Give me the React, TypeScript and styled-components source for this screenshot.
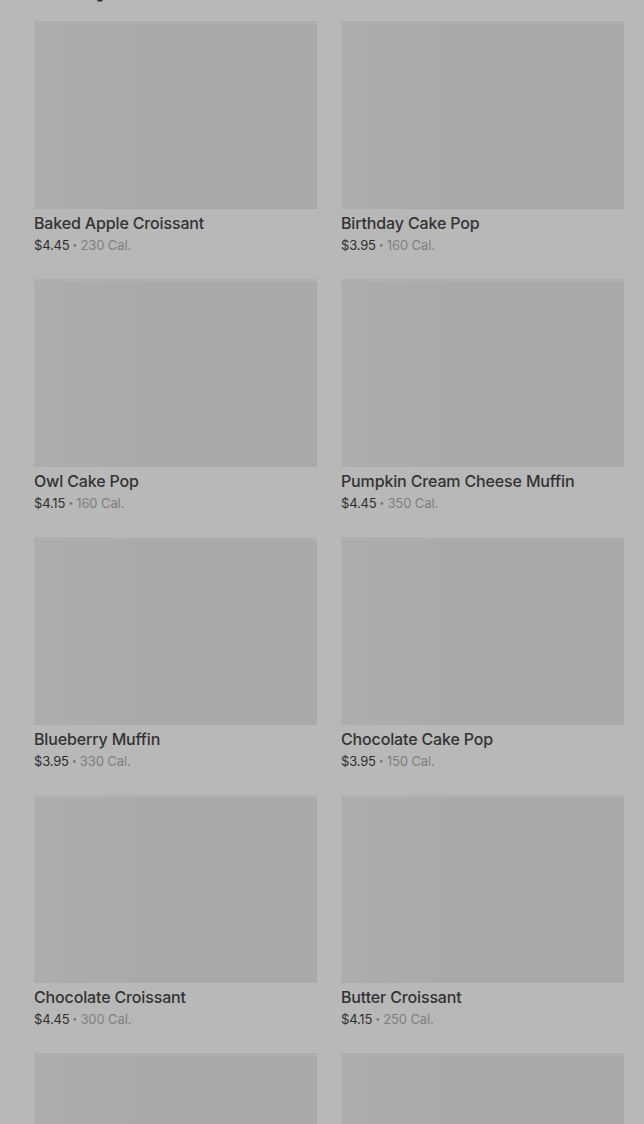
import React from 'react';
import styled, {createGlobalStyle} from "styled-components";

type Item = { name: string, price: string, cal: string };

const items: Item[] = [
    {name: 'Baked Apple Croissant', price: '$4.45', cal: '230 Cal.'},
    {name: 'Birthday Cake Pop', price: '$3.95', cal: '160 Cal.'},
    {name: 'Owl Cake Pop', price: '$4.15', cal: '160 Cal.'},
    {name: 'Pumpkin Cream Cheese Muffin', price: '$4.45', cal: '350 Cal.'},
    {name: 'Blueberry Muffin', price: '$3.95', cal: '330 Cal.'},
    {name: 'Chocolate Cake Pop', price: '$3.95', cal: '150 Cal.'},
    {name: 'Chocolate Croissant', price: '$4.45', cal: '300 Cal.'},
    {name: 'Butter Croissant', price: '$4.15', cal: '250 Cal.'},
];

const GlobalStyle = createGlobalStyle`
  html, body {
    margin: 0;
    padding: 0;
    background: #b8b8b8;
    overflow: hidden;
  }
  body {
    font-family: Inter, "Noto Sans", sans-serif;
  }
`

export default function App() {
    return (
        <>
            <GlobalStyle/>
            <StyledMenu>
                <SectionTitle>Bakery</SectionTitle>
                <Grid>
                    {items.map(item => (
                        <Card key={item.name}>
                            <Thumb/>
                            <Name>{item.name}</Name>
                            <Meta>
                                <Price>{item.price}</Price>
                                <Dot>•</Dot>
                                <Cal>{item.cal}</Cal>
                            </Meta>
                        </Card>
                    ))}
                    {/* next row still loading */}
                    <Card><Thumb/></Card>
                    <Card><Thumb/></Card>
                </Grid>
            </StyledMenu>
        </>
    );
}

const StyledMenu = styled.section`
  padding: 0 20px 0 34px;
  height: 1124px;
  overflow: hidden;
`
const SectionTitle = styled.h2`
  margin: -25px 0 0;
  height: 28px;
  font-size: 22px;
  line-height: 28px;
  font-weight: 700;
  color: #2e2e2e;
`
const Grid = styled.div`
  margin-top: 18px;
  display: grid;
  grid-template-columns: 1fr 1fr;
  column-gap: 24px;
  row-gap: 25px;
`
const Card = styled.div`
  display: flex;
  flex-direction: column;
`
const Thumb = styled.div`
  height: 188px;
  background: linear-gradient(90deg, #adadad 0%, #aaaaaa 40%, #aaaaaa 100%);
  border-top: 3px solid #afafaf;
  box-sizing: border-box;
`
const Name = styled.div`
  margin-top: 4px;
  font-size: 16px;
  line-height: 20px;
  font-weight: 500;
  letter-spacing: -0.15px;
  color: #333333;
`
const Meta = styled.div`
  margin-top: 3px;
  font-size: 13px;
  line-height: 18px;
  display: flex;
  align-items: center;
  gap: 3px;
`
const Price = styled.span`
  color: #2f2f2f;
  letter-spacing: -0.2px;
`
const Dot = styled.span`
  color: #7a7a7a;
  font-size: 9px;
`
const Cal = styled.span`
  color: #7f7f7f;
  letter-spacing: -0.1px;
`
